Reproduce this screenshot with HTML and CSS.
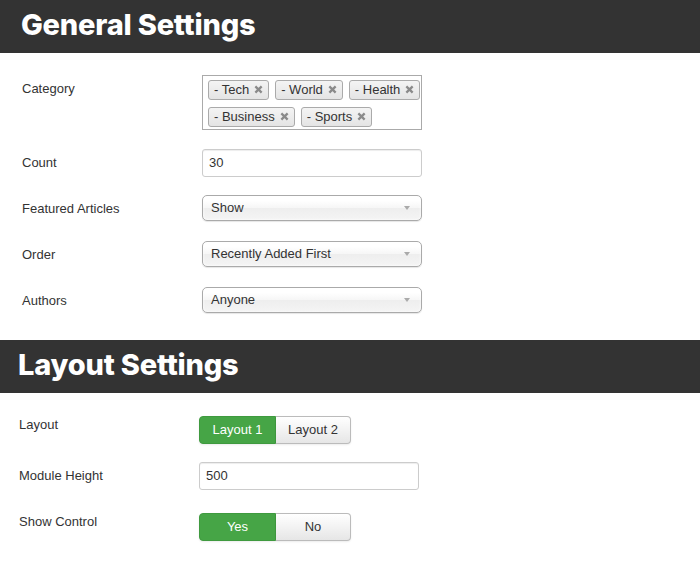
FILE: index.html
```html
<!DOCTYPE html>
<html lang="en">
<head>
<meta charset="utf-8">
<title>Module Settings</title>
<link rel="stylesheet" href="styles.css">
</head>
<body>
<section class="panel panel-general">
  <h2 class="panel-title">General Settings</h2>
  <div class="form">
    <div class="row row-category">
      <label class="label">Category</label>
      <div class="tagbox">
        <div class="tag-line">
          <span class="tag">- Tech<svg class="tag-x" viewBox="0 0 8 8"><path d="M1.2 1.2L6.8 6.8M6.8 1.2L1.2 6.8"/></svg></span>
          <span class="tag">- World<svg class="tag-x" viewBox="0 0 8 8"><path d="M1.2 1.2L6.8 6.8M6.8 1.2L1.2 6.8"/></svg></span>
          <span class="tag">- Health<svg class="tag-x" viewBox="0 0 8 8"><path d="M1.2 1.2L6.8 6.8M6.8 1.2L1.2 6.8"/></svg></span>
        </div>
        <div class="tag-line">
          <span class="tag">- Business<svg class="tag-x" viewBox="0 0 8 8"><path d="M1.2 1.2L6.8 6.8M6.8 1.2L1.2 6.8"/></svg></span>
          <span class="tag">- Sports<svg class="tag-x" viewBox="0 0 8 8"><path d="M1.2 1.2L6.8 6.8M6.8 1.2L1.2 6.8"/></svg></span>
        </div>
      </div>
    </div>
    <div class="row row-count">
      <label class="label">Count</label>
      <div class="input">30</div>
    </div>
    <div class="row row-select">
      <label class="label">Featured Articles</label>
      <div class="select">Show</div>
    </div>
    <div class="row row-select">
      <label class="label">Order</label>
      <div class="select">Recently Added First</div>
    </div>
    <div class="row row-select row-last">
      <label class="label">Authors</label>
      <div class="select">Anyone</div>
    </div>
  </div>
</section>
<section class="panel panel-layout">
  <h2 class="panel-title">Layout Settings</h2>
  <div class="form">
    <div class="row row-layout">
      <label class="label label-flush">Layout</label>
      <div class="btn-group">
        <span class="btn btn-on">Layout 1</span>
        <span class="btn">Layout 2</span>
      </div>
    </div>
    <div class="row row-height">
      <label class="label">Module Height</label>
      <div class="input input-wide">500</div>
    </div>
    <div class="row row-last">
      <label class="label label-flush">Show Control</label>
      <div class="btn-group">
        <span class="btn btn-on">Yes</span>
        <span class="btn">No</span>
      </div>
    </div>
  </div>
</section>
</body>
</html>
```
FILE: styles.css
```css
body {
  margin: 0;
  background: #fff;
  color: #333;
  font-family: "Liberation Sans", Arial, sans-serif;
  font-size: 13px;
}

.panel-title {
  margin: 0;
  height: 53px;
  box-sizing: border-box;
  padding: 0 0 4px 21px;
  background: #333;
  color: #fff;
  font-family: Inter, "DejaVu Sans", sans-serif;
  font-weight: 800;
  font-size: 29px;
  line-height: 49px;
  letter-spacing: -0.2px;
}

.panel-layout .panel-title {
  padding-left: 18px;
}

.form {
  padding: 22px 0 27px 22px;
}

.panel-layout .form {
  padding: 23px 0 28px 19px;
}

.row {
  display: flex;
  align-items: flex-start;
  margin-bottom: 20px;
}

.row-category { margin-bottom: 19px; }
.row-count { margin-bottom: 18px; }
.row-layout { margin-bottom: 18px; }
.row-height { margin-bottom: 23px; }
.row-last { margin-bottom: 0; }

.label {
  width: 180px;
  flex: none;
  padding-top: 5px;
  line-height: 18px;
}

.label-flush {
  padding-top: 0;
}

/* multi-select tag box */
.tagbox {
  width: 220px;
  height: 55px;
  box-sizing: border-box;
  border: 1px solid #aaa;
  padding: 4px 0 2px 5px;
  display: flex;
  flex-direction: column;
  gap: 7px;
  overflow: hidden;
  background: #fff;
}

.tag-line {
  display: flex;
  flex-wrap: nowrap;
  gap: 6px;
}

.tag {
  display: inline-flex;
  flex: none;
  align-items: center;
  height: 20px;
  box-sizing: border-box;
  padding: 0 5px 0 5px;
  border: 1px solid #aaa;
  border-radius: 3px;
  background: linear-gradient(#f4f4f4, #e4e4e4);
  line-height: 18px;
  white-space: nowrap;
}

.tag-x {
  width: 9px;
  height: 9px;
  margin-left: 5px;
  margin-top: -1px;
  fill: none;
  stroke: #8a8a8a;
  stroke-width: 2;
}

/* text inputs */
.input {
  width: 220px;
  height: 28px;
  box-sizing: border-box;
  padding: 0 6px;
  border: 1px solid #ccc;
  border-radius: 3px;
  box-shadow: inset 0 1px 1px rgba(0, 0, 0, 0.075);
  line-height: 26px;
  background: #fff;
}

/* select */
.select {
  position: relative;
  width: 220px;
  height: 26px;
  box-sizing: border-box;
  padding: 0 8px;
  border: 1px solid #aaa;
  border-radius: 5px;
  background: linear-gradient(#fff 20%, #f6f6f6 50%, #eee 52%, #f4f4f4 100%);
  box-shadow: inset 0 0 3px #fff, 0 1px 1px rgba(0, 0, 0, 0.1);
  line-height: 24px;
}

.select::after {
  content: "";
  position: absolute;
  right: 11px;
  top: 10px;
  border-left: 3px solid transparent;
  border-right: 3px solid transparent;
  border-top: 4px solid #aaa;
}

/* button groups */
.btn-group {
  display: flex;
}

.btn {
  display: block;
  width: 75px;
  height: 28px;
  box-sizing: border-box;
  border: 1px solid #bbb;
  border-left: 0;
  border-radius: 0 4px 4px 0;
  background: linear-gradient(#fff, #e6e6e6);
  box-shadow: 0 1px 2px rgba(0, 0, 0, 0.08);
  text-align: center;
  line-height: 26px;
  color: #333;
}

.btn-on {
  width: 77px;
  border: 1px solid #3f9a3f;
  border-radius: 4px 0 0 4px;
  background: #46a546;
  color: #fff;
}
```
